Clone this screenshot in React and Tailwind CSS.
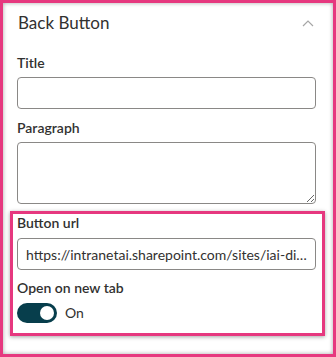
import { useState } from 'react'

const url = 'https://intranetai.sharepoint.com/sites/iai-digitalworkplace/SitePages/Home.aspx'

function Label({ children }) {
  return <div className="text-[14px] leading-[18px] font-semibold text-[#323130]">{children}</div>
}

function ChevronUp() {
  return (
    <svg width="12" height="7" viewBox="0 0 12 7" fill="none">
      <path d="M1 6 L6 1 L11 6" stroke="#a6a6a6" strokeWidth="1.2" />
    </svg>
  )
}

export default function App() {
  const [on, setOn] = useState(true)

  return (
    <div
      className="w-[336px] h-[357px] bg-white border-[3px] border-[#e6387f] shadow-[inset_0_0_4px_rgba(0,0,0,0.35)] overflow-hidden"
      style={{ fontFamily: 'Lato, "Noto Sans", sans-serif' }}
    >
      <div className="pl-[14px] pr-[17px] pt-[8px]">
        <div className="flex items-center justify-between h-[24px]">
          <span className="pl-[1px] text-[17px] leading-[24px] text-[#323130]">Back Button</span>
          <span className="pr-[2px] flex items-center">
            <ChevronUp />
          </span>
        </div>

        <div className="mt-[19px]">
          <Label>Title</Label>
          <input
            className="mt-[5px] block w-full h-[32px] rounded-[4px] border border-[#8a8886] px-[8px] text-[14px] outline-none"
          />
        </div>

        <div className="mt-[10px]">
          <Label>Paragraph</Label>
          <textarea className="mt-[5px] block w-full h-[62px] rounded-[4px] border border-[#8a8886] px-[8px] text-[14px] outline-none" />
        </div>

        <div className="mt-[7px] -ml-[7px] -mr-[9px] border-[3px] border-[#e6387f] shadow-[0_1px_4px_rgba(0,0,0,0.35)] pl-[4px] pr-[6px] pt-0 pb-[10px]">
          <Label>Button url</Label>
          <input
            readOnly
            value={url}
            className="mt-[6px] block w-full h-[32px] rounded-[4px] border border-[#8a8886] px-[8px] text-[14px] text-[#323130] outline-none text-ellipsis overflow-hidden"
          />
          <div className="mt-[9px]">
            <Label>Open on new tab</Label>
          </div>
          <div className="mt-[6px] flex items-center gap-[8px]">
            <button
              onClick={() => setOn(!on)}
              className="w-[40px] h-[20px] rounded-full bg-[#073e4c] flex items-center justify-end pr-[3px]"
            >
              <span className="w-[14px] h-[14px] rounded-full bg-white" />
            </button>
            <span className="text-[14px] leading-[20px] text-[#323130]">{on ? 'On' : 'Off'}</span>
          </div>
        </div>
      </div>
    </div>
  )
}
